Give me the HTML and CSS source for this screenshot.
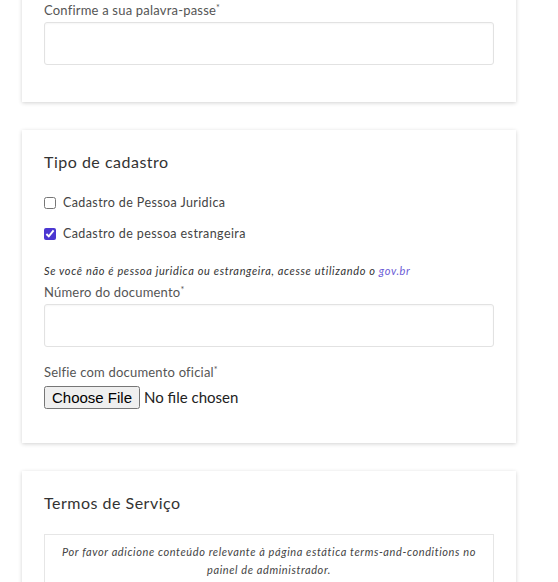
FILE: index.html
```html
<!DOCTYPE html>
<html lang="pt">
<head>
<meta charset="utf-8">
<title>Cadastro</title>
<link rel="stylesheet" href="styles.css">
</head>
<body>
<main class="page">
  <section class="card card-first">
    <label class="label" for="pw2">Confirme a sua palavra-passe<span class="req">*</span></label>
    <input class="input" id="pw2" type="password">
  </section>

  <section class="card">
    <h2 class="title">Tipo de cadastro</h2>
    <div class="checks">
      <label class="check"><input type="checkbox"> Cadastro de Pessoa Juridica</label>
      <label class="check"><input type="checkbox" checked> Cadastro de pessoa estrangeira</label>
    </div>
    <p class="hint">Se você não é pessoa juridica ou estrangeira, acesse utilizando o <a href="#">gov.br</a></p>
    <label class="label" for="doc">Número do documento<span class="req">*</span></label>
    <input class="input" id="doc" type="text">
    <label class="label label-file" for="selfie">Selfie com documento oficial<span class="req">*</span></label>
    <input class="file" id="selfie" type="file">
  </section>

  <section class="card">
    <h2 class="title">Termos de Serviço</h2>
    <div class="terms">Por favor adicione conteúdo relevante à página estática terms-and-conditions no painel de administrador.</div>
  </section>
</main>
</body>
</html>
```
FILE: styles.css
```css
html, body {
  margin: 0;
  padding: 0;
  background: #fff;
}
body {
  font-family: Lato, "Open Sans", sans-serif;
  color: #555;
}
.page {
  display: flex;
  flex-direction: column;
  gap: 28px;
  padding: 0 42px 40px 22px;
}
.card {
  background: #fff;
  box-shadow: 0 1px 4px rgba(0, 0, 0, 0.18);
  padding: 22px 22px 22px;
  display: flex;
  flex-direction: column;
}
.card-first {
  margin-top: -24px;
  padding-bottom: 37px;
}
.label {
  font-size: 13px;
  line-height: 20px;
  color: #555;
  letter-spacing: 0.2px;
  margin-bottom: 2px;
}
.req {
  font-size: 9px;
  vertical-align: 4px;
}
.input {
  box-sizing: border-box;
  height: 43px;
  border: 1px solid #e2e2e2;
  border-radius: 3px;
  box-shadow: inset 0 1px 2px rgba(0, 0, 0, 0.04);
  margin: 0;
}
.title {
  font-size: 16px;
  font-weight: 400;
  color: #333;
  letter-spacing: 0.5px;
  margin: 0;
  line-height: 20px;
}
.checks {
  display: flex;
  flex-direction: column;
  gap: 11px;
  margin-top: 21px;
}
.check {
  display: flex;
  align-items: center;
  gap: 7px;
  font-size: 12.5px;
  letter-spacing: 0.4px;
  color: #444;
  line-height: 20px;
}
.check input {
  margin: 0;
  width: 12px;
  height: 12px;
  accent-color: #4b37d1;
}
.hint {
  font-size: 11px;
  font-style: italic;
  letter-spacing: 0.65px;
  color: #333;
  margin: 19px 0 0;
  line-height: 16px;
}
.hint a {
  color: #6b5bd6;
  text-decoration: none;
}
.hint + .label {
  margin-top: 1px;
}
.label-file {
  margin-top: 13px;
}
.file {
  font-family: Lato, "Open Sans", sans-serif;
  font-size: 15px;
  color: #222;
  margin: 2px 0 12px;
}
.terms {
  margin-top: 21px;
  border: 1px solid #e6e6e6;
  border-bottom: none;
  padding: 8px 12px 20px;
  font-size: 11px;
  font-style: italic;
  letter-spacing: 0.6px;
  line-height: 18px;
  text-align: center;
  color: #444;
}
```
